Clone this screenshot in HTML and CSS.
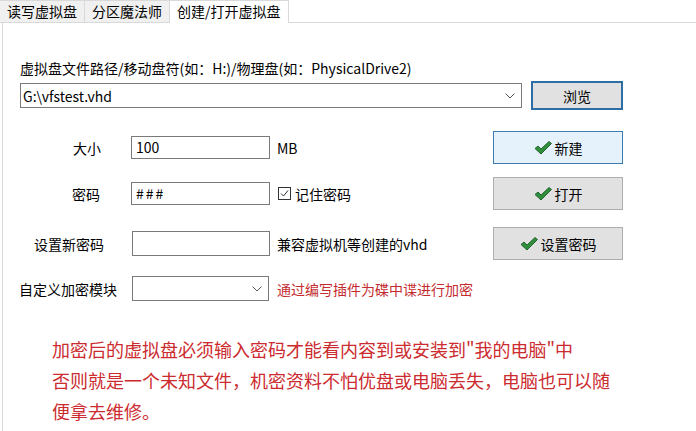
FILE: index.html
```html
<!DOCTYPE html>
<html lang="zh-CN">
<head>
  <meta charset="UTF-8" />
  <title>创建/打开虚拟盘</title>
  <link rel="stylesheet" href="styles.css">
</head>
<body>

<div class="tabs">
  <div class="tab">读写虚拟盘</div>
  <div class="tab">分区魔法师</div>
  <div class="tab active">创建/打开虚拟盘</div>
  <div class="tab-fill"></div>
</div>

<div class="panel">
  <div class="path-block">
    <div class="path-label">虚拟盘文件路径/移动盘符(如：H:)/物理盘(如：PhysicalDrive2)</div>
    <div class="path-row">
      <div class="combo combo-wide">
        <span>G:\vfstest.vhd</span>
        <svg class="chevron" width="10" height="6" viewBox="0 0 10 6"><polyline points="0.5,0.5 5,5 9.5,0.5" fill="none" stroke="#555" stroke-width="1"/></svg>
      </div>
      <button class="btn btn-focus">浏览</button>
    </div>
  </div>

  <div class="form">
    <div class="row">
      <span class="lbl lbl-size">大小</span>
      <div class="field">100</div>
      <span class="extra">MB</span>
      <button class="btn btn-hover">
        <svg class="tick" width="18" height="14" viewBox="0 0 18 14"><polygon points="1,7.5 4,5 7,8 15,0.5 17.5,2.5 7,13" fill="#2f8f3c" stroke="#1b5a24" stroke-width="0.9" stroke-linejoin="round"/></svg>
        新建
      </button>
    </div>

    <div class="row row-2">
      <span class="lbl lbl-pass">密码</span>
      <div class="field field-mask">###</div>
      <label class="extra check">
        <span class="box"><svg width="11" height="11" viewBox="0 0 11 11"><polyline points="2,5.5 4.5,8 9,2.5" fill="none" stroke="#333" stroke-width="1"/></svg></span>
        记住密码
      </label>
      <button class="btn">
        <svg class="tick" width="18" height="14" viewBox="0 0 18 14"><polygon points="1,7.5 4,5 7,8 15,0.5 17.5,2.5 7,13" fill="#2f8f3c" stroke="#1b5a24" stroke-width="0.9" stroke-linejoin="round"/></svg>
        打开
      </button>
    </div>

    <div class="row row-3">
      <span class="lbl lbl-newpass">设置新密码</span>
      <div class="field"></div>
      <span class="extra">兼容虚拟机等创建的vhd</span>
      <button class="btn">
        <svg class="tick" width="18" height="14" viewBox="0 0 18 14"><polygon points="1,7.5 4,5 7,8 15,0.5 17.5,2.5 7,13" fill="#2f8f3c" stroke="#1b5a24" stroke-width="0.9" stroke-linejoin="round"/></svg>
        设置密码
      </button>
    </div>

    <div class="row row-4">
      <span class="lbl lbl-module">自定义加密模块</span>
      <div class="combo combo-small">
        <span></span>
        <svg class="chevron" width="10" height="6" viewBox="0 0 10 6"><polyline points="0.5,0.5 5,5 9.5,0.5" fill="none" stroke="#555" stroke-width="1"/></svg>
      </div>
      <span class="extra red">通过编写插件为碟中谍进行加密</span>
    </div>
  </div>

  <p class="note">加密后的虚拟盘必须输入密码才能看内容到或安装到"我的电脑"中<br>否则就是一个未知文件，机密资料不怕优盘或电脑丢失，电脑也可以随<br>便拿去维修。</p>
</div>

</body>
</html>
```

FILE: styles.css
```css
body {
  margin: 0;
  background: #fff;
  font-family: "Microsoft YaHei", "Noto Sans CJK SC", sans-serif;
  font-size: 14px;
  color: #000;
}
.tabs {
  display: flex;
  height: 23px;
}
.tab {
  box-sizing: border-box;
  height: 23px;
  padding: 0 7px;
  line-height: 21px;
  background: #f0f0f0;
  border-top: 1px solid #d9d9d9;
  border-right: 1px solid #d9d9d9;
  border-bottom: 1px solid #d9d9d9;
  white-space: nowrap;
}
.tab.active {
  background: #fff;
  border-bottom: none;
}
.tab-fill {
  flex: 1;
  border-bottom: 1px solid #d9d9d9;
}
.panel {
  margin-left: 2px;
  border-left: 1px solid #d9d9d9;
  min-height: 408px;
}
.path-block {
  padding: 35px 0 0 17px;
}
.path-label {
  line-height: 20px;
}
.path-row {
  display: flex;
  align-items: center;
  height: 29px;
  margin-top: 3px;
}
.combo {
  box-sizing: border-box;
  height: 25px;
  border: 1px solid #7a7a7a;
  background: #fff;
  display: flex;
  align-items: center;
  justify-content: space-between;
  padding: 0 6px 0 2px;
}
.combo-wide {
  width: 502px;
}
.combo-small {
  width: 137px;
  margin-left: 1px;
}
.btn {
  box-sizing: border-box;
  font: inherit;
  color: #000;
  background: #e1e1e1;
  border: 1px solid #adadad;
  height: 33px;
  width: 130px;
  padding: 0;
  display: flex;
  align-items: center;
  justify-content: center;
  gap: 3px;
}
.btn-focus {
  width: 92px;
  height: 29px;
  margin-left: 9px;
  border: 2px solid #2f6ea5;
}
.btn-hover {
  background: #e5f1fb;
  border-color: #3d7db2;
}
.form {
  margin-top: 21px;
}
.row {
  display: grid;
  grid-template-columns: 128px 139px 223px 130px;
  align-items: center;
  height: 33px;
}
.row-2 {
  margin-top: 13px;
}
.row-3 {
  margin-top: 17px;
}
.row-4 {
  margin-top: 12px;
}
.lbl {
  white-space: nowrap;
}
.lbl-size { padding-left: 70px; }
.lbl-pass { padding-left: 69px; }
.lbl-newpass { padding-left: 31px; }
.lbl-module { padding-left: 16px; }
.field {
  box-sizing: border-box;
  height: 23px;
  border: 1px solid #7a7a7a;
  padding: 0 4px;
  line-height: 21px;
}
.field-mask {
  letter-spacing: 2px;
}
.row-3 .field {
  height: 25px;
  margin-left: 1px;
}
.extra {
  padding-left: 7px;
  white-space: nowrap;
}
.check {
  display: flex;
  align-items: center;
  gap: 4px;
  padding-left: 8px;
}
.box {
  box-sizing: border-box;
  width: 13px;
  height: 13px;
  border: 1px solid #333;
  display: flex;
  align-items: center;
  justify-content: center;
}
.red {
  color: #c42b2f;
}
.note {
  margin: 29px 0 0;
  padding-left: 49px;
  font-size: 18px;
  line-height: 31px;
  color: #cc2b2f;
  white-space: nowrap;
}
```
